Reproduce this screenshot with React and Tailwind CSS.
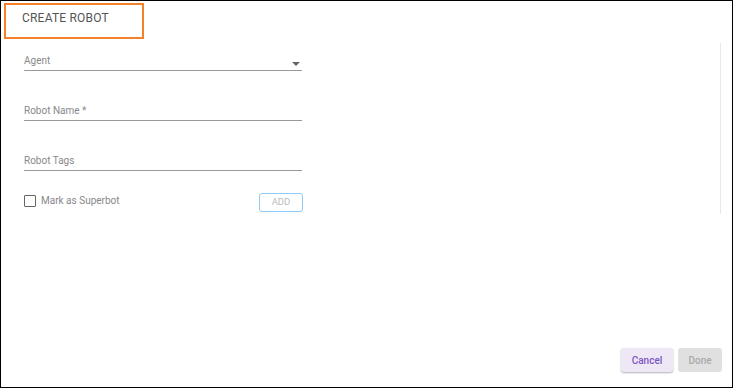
export default function App() {
  return (
    <div
      className="w-[733px] h-[388px] bg-white border border-black flex flex-col relative"
      style={{ fontFamily: "Roboto, 'Liberation Sans', sans-serif" }}
    >
      <div className="absolute left-[3px] top-[2px] w-[140px] h-[36px] border-2 border-[#f5802a]" />
      <div className="h-[38px] pl-[21px] pt-[8px] text-[12px] leading-[18px] text-[#555] tracking-[0.2px]">CREATE ROBOT</div>
      <div className="flex flex-1">
        <div className="w-[278px] ml-[23px] flex flex-col">
          <div className="mt-[14px] h-[18px] border-b border-[#999] flex items-start justify-between">
            <div className="text-[10px] text-[#888] leading-[14px] mt-[1px]">Agent</div>
            <svg width="10" height="6" viewBox="0 0 10 6" className="mt-[8px] mr-[1px]">
              <path d="M1 1h8L5 5z" fill="#666" />
            </svg>
          </div>
          <div className="mt-[32px] h-[18px] border-b border-[#999]">
            <div className="text-[10px] text-[#888] leading-[14px] mt-[1px]">Robot Name *</div>
          </div>
          <div className="mt-[32px] h-[18px] border-b border-[#999]">
            <div className="text-[10px] text-[#888] leading-[14px] mt-[1px]">Robot Tags</div>
          </div>
          <div className="mt-[22px] flex items-center justify-between">
            <div className="flex items-center gap-[5px] mt-[-3px]">
              <div className="w-[12px] h-[12px] border-[1.5px] border-[#666] rounded-[1px]" />
              <div className="text-[10px] leading-[14px] text-[#888]">Mark as Superbot</div>
            </div>
            <div className="w-[44px] h-[19px] border border-[#90caf9] rounded-[3px] flex items-center justify-center text-[9.5px] text-[#bbb] mr-[-1px]">ADD</div>
          </div>
        </div>
        <div className="flex-1" />
        <div className="w-px bg-[#e8e8e8] mt-[4px] h-[171px] mr-[11px]" />
      </div>
      <div className="flex justify-end gap-[5px] pr-[10px] pb-[15px]">
        <div className="w-[52px] h-[24px] rounded-[3px] bg-[#ede7f6] shadow-[0_1px_2px_rgba(0,0,0,0.3)] flex items-center justify-center text-[10px] font-medium text-[#7e57c2]">Cancel</div>
        <div className="w-[44px] h-[24px] rounded-[3px] bg-[#e0e0e0] flex items-center justify-center text-[10px] font-medium text-[#aaa]">Done</div>
      </div>
    </div>
  );
}
